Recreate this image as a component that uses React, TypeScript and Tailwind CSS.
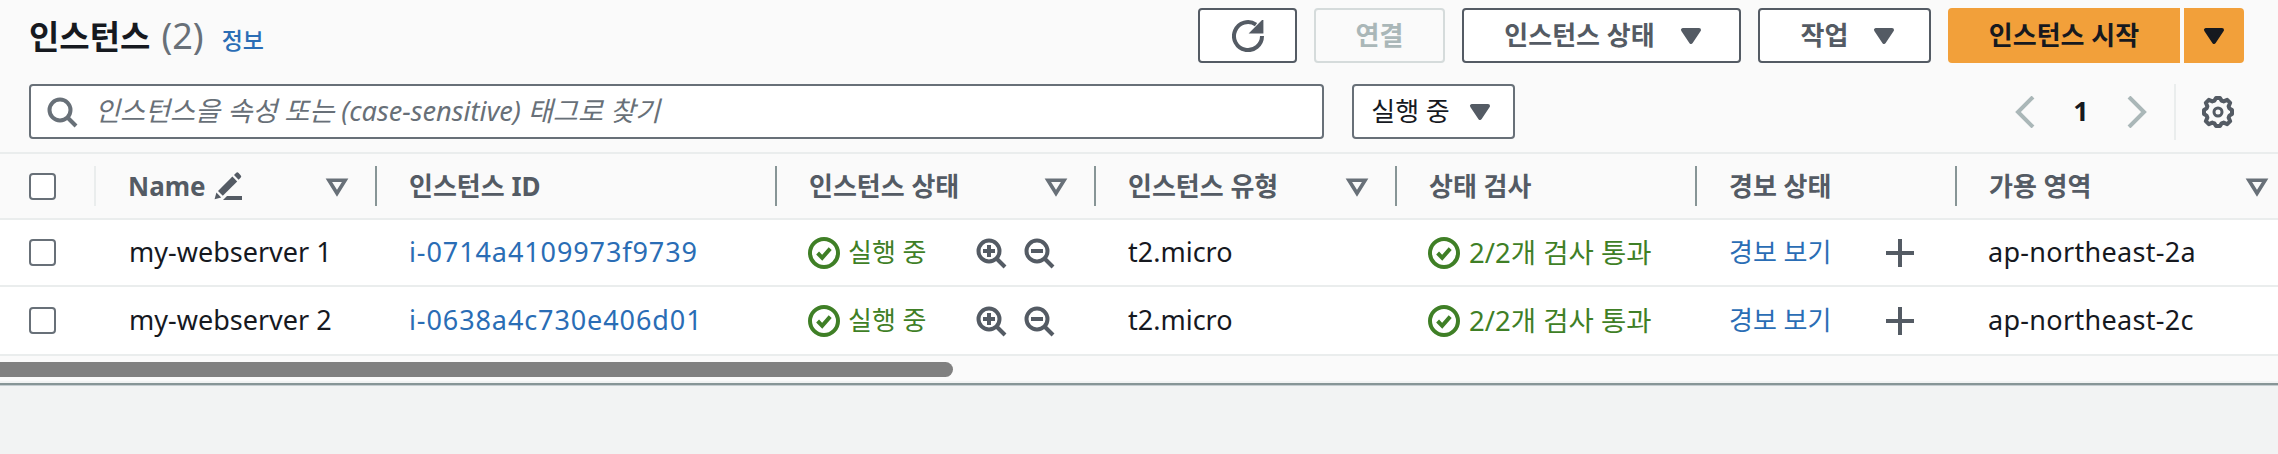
import { ReactNode } from "react"

const columns = "grid grid-cols-[94px_281px_400px_319px_301px_300px_260px_323px]"

function Caret({ color = "#545b64" }: { color?: string }) {
  return (
    <svg viewBox="0 0 16 16" className="w-[32px] h-[32px] shrink-0" fill={color} stroke={color} strokeWidth="2" strokeLinejoin="round">
      <path d="M4 5h8l-4 6-4-6z" />
    </svg>
  )
}

function SortIcon() {
  return (
    <svg viewBox="0 0 16 16" className="w-[26px] h-[26px] shrink-0" fill="none" stroke="#687078" strokeWidth="2.2">
      <path d="M3 4.5h10l-5 8-5-8z" />
    </svg>
  )
}

function SearchIcon() {
  return (
    <svg viewBox="0 0 16 16" className="w-[32px] h-[32px] shrink-0" fill="none" stroke="#687078" strokeWidth="2">
      <circle cx="7" cy="7" r="5.25" />
      <path d="M11 11l4 4" />
    </svg>
  )
}

function ZoomIcon({ plus }: { plus?: boolean }) {
  return (
    <svg viewBox="0 0 16 16" className="w-[32px] h-[32px] shrink-0" fill="none" stroke="#545b64" strokeWidth="2">
      <circle cx="7" cy="7" r="5.25" />
      <path d="M11 11l4 4" />
      <path d={plus ? "M4 7h6M7 4v6" : "M4 7h6"} />
    </svg>
  )
}

function StatusIcon() {
  return (
    <svg viewBox="0 0 16 16" className="w-[32px] h-[32px] shrink-0" fill="none" stroke="#3f7f26" strokeWidth="2">
      <circle cx="8" cy="8" r="7" />
      <path d="M4.8 8l2.3 2.4 4-4.6" />
    </svg>
  )
}

function Button({ children, width, disabled }: { children: ReactNode; width: string; disabled?: boolean }) {
  return (
    <div
      className={
        disabled
          ? `${width} h-full flex items-center justify-center border-2 border-[#d5dbdb] rounded-[4px] text-[#aab7b8] font-bold text-[26px]`
          : `${width} h-full flex items-center justify-center gap-[20px] border-2 border-[#545b64] rounded-[4px] bg-white text-[#545b64] font-bold text-[26px]`
      }
    >
      {children}
    </div>
  )
}

function HeaderCell({ label, sort, light, last, children }: { label: string; sort?: boolean; light?: boolean; last?: boolean; children?: ReactNode }) {
  return (
    <div className={`h-[40px] flex items-center justify-between pl-[32px] ${last ? "pr-[8px]" : "pr-[25px]"} border-l-2 ${light ? "border-[#eaeded]" : "border-[#879596]"}`}>
      <div className="flex items-center gap-[5px] font-bold text-[26px] text-[#545b64]">
        {label}
        {children}
      </div>
      {sort && <SortIcon />}
    </div>
  )
}

function Row({ name, id, zone, last }: { name: string; id: string; zone: string; last?: boolean }) {
  return (
    <div className={`${columns} ${last ? "h-[69px]" : "h-[67px]"} items-center bg-white border-b-2 border-[#eaeded] text-[27px] text-[#16191f]`}>
      <div className="pl-[29px]">
        <div className="w-[27px] h-[27px] rounded-[4px] border-2 border-[#687078] bg-white" />
      </div>
      <div className="pl-[35px]">{name}</div>
      <div className="pl-[34px] text-[#2a6db5] tracking-[0.9px]">{id}</div>
      <div className="pl-[33px] flex items-center">
        <StatusIcon />
        <span className="ml-[8px] w-[127px] text-[#3f7f26] text-[26px]">실행 중</span>
        <ZoomIcon plus />
        <span className="ml-[16px]">
          <ZoomIcon />
        </span>
      </div>
      <div className="pl-[34px]">t2.micro</div>
      <div className="pl-[33px] flex items-center">
        <StatusIcon />
        <span className="ml-[9px] text-[#3f7f26] text-[27.5px]">2/2개 검사 통과</span>
      </div>
      <div className="pl-[34px] flex items-center text-[#2a6db5] text-[26px]">
        <span className="w-[155px]">경보 보기</span>
        <svg viewBox="0 0 16 16" className="w-[32px] h-[32px]" fill="none" stroke="#545b64" strokeWidth="2">
          <path d="M1 8h14M8 1v14" />
        </svg>
      </div>
      <div className="pl-[33px] tracking-[0.3px]">{zone}</div>
    </div>
  )
}

export default function App() {
  return (
    <div className="w-[2278px] h-[454px] overflow-hidden bg-[#f2f3f3] text-[#16191f] [font-family:'Noto_Sans','Noto_Sans_CJK_KR',sans-serif]">
      <div className="bg-[#fafafa] pt-[8px]">
        <div className="flex items-center justify-between h-[55px] pl-[29px] pr-[34px]">
          <div className="flex items-baseline">
            <span className="font-bold text-[33px]">인스턴스</span>
            <span className="ml-[11px] text-[36px] text-[#687078]">(2)</span>
            <span className="ml-[18px] text-[23px] text-[#2a6db5] font-medium">정보</span>
          </div>
          <div className="flex h-full gap-[17px]">
            <Button width="w-[99px]">
              <svg viewBox="0 0 16 16" className="w-[32px] h-[32px]" fill="none" stroke="#545b64" strokeWidth="2">
                <path d="M15 8a7 7 0 1 1-3-5.7" />
                <path d="M15 1v5h-5z" fill="#545b64" strokeWidth="1.4" />
              </svg>
            </Button>
            <Button width="w-[131px]" disabled>
              연결
            </Button>
            <Button width="w-[279px] pl-[8px]">
              인스턴스 상태
              <Caret />
            </Button>
            <Button width="w-[173px] pl-[12px]">
              작업
              <Caret />
            </Button>
            <div className="flex h-full gap-[4px]">
              <div className="w-[232px] flex items-center justify-center bg-[#f2a03a] rounded-l-[4px] font-bold text-[26px] text-[#16191f]">인스턴스 시작</div>
              <div className="w-[60px] flex items-center justify-center bg-[#f2a03a] rounded-r-[4px]">
                <Caret color="#16191f" />
              </div>
            </div>
          </div>
        </div>
        <div className="flex items-center h-[55px] mt-[21px] pl-[29px] pr-[44px]">
          <div className="w-[1295px] h-full flex items-center pl-[15px] border-2 border-[#687078] rounded-[4px] bg-white">
            <SearchIcon />
            <span className="ml-[17px] italic text-[27.2px] text-[#687078]">인스턴스을 속성 또는 (case-sensitive) 태그로 찾기</span>
          </div>
          <div className="ml-[28px] w-[163px] h-full flex items-center justify-center gap-[14px] border-2 border-[#687078] rounded-[4px] bg-white text-[26px]">
            실행 중
            <Caret />
          </div>
          <div className="ml-auto flex items-center">
            <svg viewBox="0 0 20 32" className="w-[20px] h-[32px]" fill="none" stroke="#aab7b8" strokeWidth="4">
              <path d="M18 1L3 16l15 15" />
            </svg>
            <span className="w-[92px] text-center font-bold text-[27px]">1</span>
            <svg viewBox="0 0 20 32" className="w-[20px] h-[32px]" fill="none" stroke="#aab7b8" strokeWidth="4">
              <path d="M2 1l15 15L2 31" />
            </svg>
            <div className="ml-[27px] w-[2px] h-[56px] bg-[#eaeded]" />
            <svg viewBox="0 0 16 16" className="ml-[26px] w-[32px] h-[32px]" fill="none" stroke="#545b64" strokeWidth="2" strokeLinejoin="round">
              <path d="M13.3 5.2l.8-1.8-1.5-1.5-1.8.8c-.3-.2-.7-.3-1-.4L9 1H7l-.8 1.3c-.3.1-.7.2-1 .4l-1.8-.8-1.5 1.5.8 1.8c-.2.3-.3.7-.4 1L1 7v2l1.3.8c.1.4.3.7.4 1l-.8 1.8 1.5 1.5 1.8-.8c.3.2.7.3 1 .4L7 15h2l.8-1.3c.4-.1.7-.3 1-.4l1.8.8 1.5-1.5-.8-1.8c.2-.3.3-.7.4-1L15 9V7l-1.3-.8c-.1-.3-.2-.7-.4-1z" />
              <circle cx="8" cy="8" r="2" strokeWidth="1.5" />
            </svg>
          </div>
        </div>
        <div className={`${columns} mt-[13px] h-[68px] items-center border-y-2 border-[#eaeded]`}>
          <div className="pl-[29px]">
            <div className="w-[27px] h-[27px] rounded-[4px] border-2 border-[#687078] bg-white" />
          </div>
          <HeaderCell label="Name" sort light>
            <svg viewBox="0 0 16 16" className="w-[32px] h-[32px]" fill="#545b64" stroke="none">
              <path d="M1.8 14.6l.9-3.3 2.4 2.4z" />
              <path d="M3.5 10.5L10.7 3.3l2.4 2.4-7.2 7.2z" />
              <path d="M11.5 2.5l1-1a.9.9 0 0 1 1.3 0l1 1.1a.9.9 0 0 1 0 1.3l-1 1z" />
              <path d="M8 13h7.5v2H6z" />
            </svg>
          </HeaderCell>
          <HeaderCell label="인스턴스 ID" />
          <HeaderCell label="인스턴스 상태" sort />
          <HeaderCell label="인스턴스 유형" sort />
          <HeaderCell label="상태 검사" />
          <HeaderCell label="경보 상태" />
          <HeaderCell label="가용 영역" sort last />
        </div>
        <Row name="my-webserver 1" id="i-0714a4109973f9739" zone="ap-northeast-2a" />
        <Row name="my-webserver 2" id="i-0638a4c730e406d01" zone="ap-northeast-2c" last />
        <div className="h-[25px] pt-[6px]">
          <div className="w-[953px] h-[15px] rounded-r-full rounded-l-[4px] bg-[#808080]" />
        </div>
      </div>
      <div className="h-[2px] bg-[#f2f3f3]" />
      <div className="h-[2px] bg-[#879596]" />
      <div className="h-[1px] bg-[#c5ccd0]" />
    </div>
  )
}
